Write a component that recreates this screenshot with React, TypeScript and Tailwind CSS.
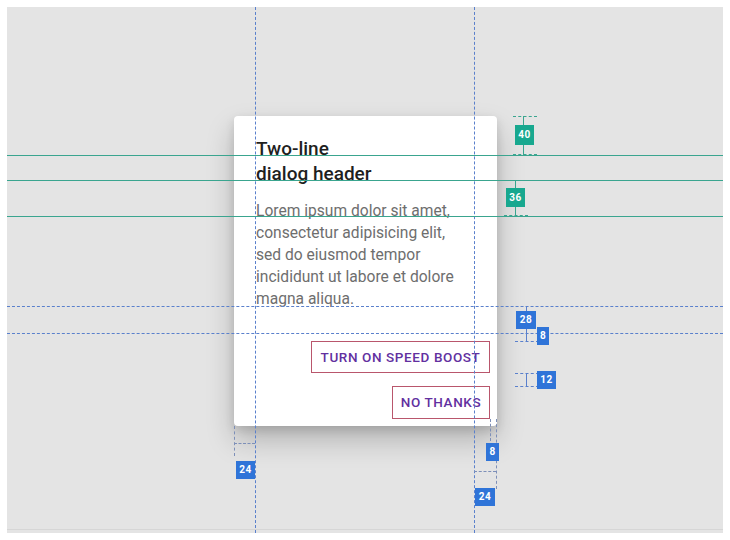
import React from "react";

function Badge({ className, children }: { className: string; children: React.ReactNode }) {
  return (
    <div
      className={
        "absolute flex items-center justify-center text-[10px] font-bold text-white leading-none tracking-[0.5px] " +
        className
      }
      style={{ fontFamily: "Roboto, 'DejaVu Sans', sans-serif" }}
    >
      {children}
    </div>
  );
}

export default function App() {
  return (
    <div className="w-[730px] h-[540px] bg-white p-[7px]" style={{ fontFamily: "Roboto, 'Liberation Sans', sans-serif" }}>
      <div className="relative w-[716px] h-[526px] bg-[#e4e4e4] overflow-hidden pl-[227px] pt-[109px]">
        {/* dialog */}
        <div className="relative z-10 w-[263px] h-[310px] bg-white rounded-[4px] shadow-[0_14px_28px_rgba(0,0,0,0.22),0_4px_10px_rgba(0,0,0,0.12)] pl-[22px] pr-[7px] pt-[20px] flex flex-col">
          <div className="text-[19px] leading-[25px] font-medium text-[#1f1f1f]">
            Two-line
            <br />
            dialog header
          </div>
          <div className="mt-[14px] w-[202px] text-[15.6px] leading-[22px] text-[#6e6e6e]">
            Lorem ipsum dolor sit amet, consectetur adipisicing elit, sed do eiusmod tempor incididunt ut labore et dolore magna aliqua.
          </div>
          <div className="mt-[31px] flex flex-col items-end gap-[13px]">
            <div className="h-[32px] w-[179px] border border-[#b9566c] flex items-center justify-center text-[13.5px] font-medium tracking-[0.6px] text-[#62309f]">
              TURN ON SPEED BOOST
            </div>
            <div className="h-[33px] w-[98px] border border-[#b9566c] flex items-center justify-center text-[13.5px] font-medium tracking-[0.6px] text-[#62309f]">
              NO THANKS
            </div>
          </div>
        </div>

        {/* overlay guides (coords relative to gray area: page - 7) */}
        <div className="absolute inset-0 z-20 pointer-events-none">
          {/* vertical blue dashed */}
          <div className="absolute left-[248px] top-0 h-full border-l border-dashed border-[#5a80cc]" />
          <div className="absolute left-[467px] top-0 h-full border-l border-dashed border-[#5a80cc]" />
          {/* horizontal blue dashed */}
          <div className="absolute top-[299px] left-0 w-full border-t border-dashed border-[#5a80cc]" />
          <div className="absolute top-[326px] left-0 w-full border-t border-dashed border-[#5a80cc]" />
          {/* teal solid lines */}
          <div className="absolute top-[148px] left-0 w-full h-px bg-[#3aa58f]" />
          <div className="absolute top-[173px] left-0 w-full h-px bg-[#3aa58f]" />
          <div className="absolute top-[209px] left-0 w-full h-px bg-[#3aa58f]" />

          {/* 40 measure */}
          <div className="absolute left-[506px] top-[109px] w-[24px] border-t border-dashed border-[#3aa58f]" />
          <div className="absolute left-[506px] top-[147px] w-[24px] border-t border-dashed border-[#3aa58f]" />
          <div className="absolute left-[516px] top-[109px] h-[39px] w-px bg-[#3aa58f]" />
          <Badge className="left-[508px] top-[118px] w-[19px] h-[20px] bg-[#18a88f]">40</Badge>

          {/* 36 measure */}
          <div className="absolute left-[508px] top-[173px] h-[36px] w-px bg-[#3aa58f]" />
          <div className="absolute left-[497px] top-[208px] w-[24px] border-t border-dashed border-[#3aa58f]" />
          <Badge className="left-[499px] top-[181px] w-[19px] h-[19px] bg-[#18a88f]">36</Badge>

          {/* 28 */}
          <div className="absolute left-[519px] top-[299px] h-[27px] w-px bg-[#5a80cc]" />
          <Badge className="left-[509px] top-[304px] w-[20px] h-[18px] bg-[#2f74d8]">28</Badge>
          {/* 8 */}
          <div className="absolute left-[508px] top-[334px] w-[24px] border-t border-dashed border-[#5a80cc]" />
          <div className="absolute left-[519px] top-[326px] h-[8px] w-px bg-[#5a80cc]" />
          <Badge className="left-[530px] top-[320px] w-[12px] h-[18px] bg-[#2f74d8]">8</Badge>
          {/* 12 */}
          <div className="absolute left-[508px] top-[366px] w-[24px] border-t border-dashed border-[#5a80cc]" />
          <div className="absolute left-[508px] top-[379px] w-[24px] border-t border-dashed border-[#5a80cc]" />
          <div className="absolute left-[519px] top-[366px] h-[13px] w-px bg-[#5a80cc]" />
          <Badge className="left-[530px] top-[364px] w-[19px] h-[18px] bg-[#2f74d8]">12</Badge>

          {/* bottom 8 */}
          <div className="absolute left-[483px] top-[412px] h-[22px] border-l border-dashed border-[#7d8fb8]" />
          <div className="absolute left-[489px] top-[412px] h-[70px] border-l border-dashed border-[#7d8fb8]" />
          <Badge className="left-[479px] top-[436px] w-[13px] h-[18px] bg-[#2f74d8]">8</Badge>

          {/* bottom left 24 */}
          <div className="absolute left-[227px] top-[419px] h-[30px] border-l border-dashed border-[#7d8fb8]" />
          <div className="absolute left-[227px] top-[436px] w-[21px] border-t border-dashed border-[#7d8fb8]" />
          <Badge className="left-[229px] top-[454px] w-[19px] h-[18px] bg-[#2f74d8]">24</Badge>

          {/* bottom right 24 */}
          <div className="absolute left-[467px] top-[464px] w-[22px] border-t border-dashed border-[#7d8fb8]" />
          <Badge className="left-[468px] top-[481px] w-[20px] h-[18px] bg-[#2f74d8]">24</Badge>
        </div>
        <div className="absolute left-0 bottom-[3px] w-full h-px bg-[#d6d6d6]" />
      </div>
    </div>
  );
}
